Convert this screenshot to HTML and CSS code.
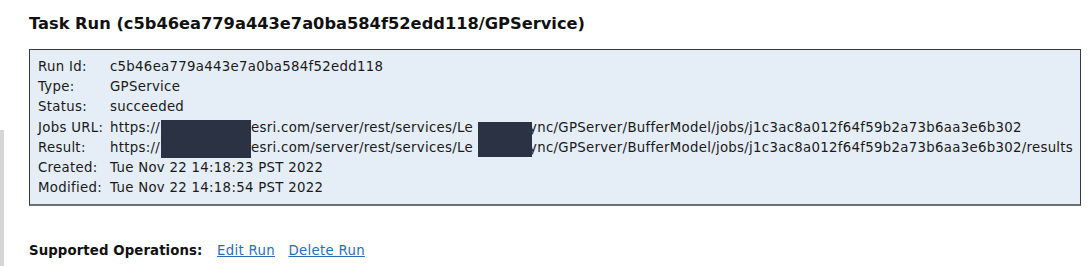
FILE: index.html
```html
<!DOCTYPE html>
<html>
<head>
<meta charset="utf-8">
<title>Task Run</title>
<link rel="stylesheet" href="styles.css">
</head>
<body>
<div class="edge"></div>
<div class="page">
  <h2 class="title">Task Run (c5b46ea779a443e7a0ba584f52edd118/GPService)</h2>
  <div class="panel">
    <div class="info">
      <div class="lbl">Run Id:</div><div class="val">c5b46ea779a443e7a0ba584f52edd118</div>
      <div class="lbl">Type:</div><div class="val">GPService</div>
      <div class="lbl">Status:</div><div class="val">succeeded</div>
      <div class="lbl">Jobs URL:</div><div class="val">https://<span class="gap1 mask1"></span>esri.com/server/rest/services/Le<span class="gap2 mask2"></span>ync/GPServer/BufferModel/jobs/j1c3ac8a012f64f59b2a73b6aa3e6b302</div>
      <div class="lbl">Result:</div><div class="val">https://<span class="gap1"></span>esri.com/server/rest/services/Le<span class="gap2"></span>ync/GPServer/BufferModel/jobs/j1c3ac8a012f64f59b2a73b6aa3e6b302/results</div>
      <div class="lbl">Created:</div><div class="val">Tue Nov 22 14:18:23 PST 2022</div>
      <div class="lbl">Modified:</div><div class="val">Tue Nov 22 14:18:54 PST 2022</div>
    </div>
  </div>
  <div class="ops">
    <span class="ops-label">Supported Operations:</span>
    <a class="op" href="#">Edit Run</a>
    <a class="op" href="#">Delete Run</a>
  </div>
</div>
</body>
</html>
```

FILE: styles.css
```css
html, body {
  margin: 0;
  padding: 0;
  background: #ffffff;
}
body {
  font-family: "DejaVu Sans", Verdana, sans-serif;
  font-size: 13.3px;
  letter-spacing: 0.3px;
  color: #1a1a1a;
  position: relative;
  min-height: 266px;
}
.edge {
  position: absolute;
  left: 0;
  top: 130px;
  width: 4px;
  height: 136px;
  background: #d6d6d6;
}
.page {
  padding: 0 9px 0 29px;
}
.title {
  margin: 0;
  padding-top: 13px;
  font-size: 16.25px;
  letter-spacing: 0;
  font-weight: bold;
  line-height: 22px;
  color: #111;
}
.panel {
  margin-top: 14px;
  width: 1052px;
  box-sizing: border-box;
  background: #e5edf6;
  border: 1px solid #3a3a3a;
  border-bottom: 2px solid #6b7171;
  padding: 7px 0 6px 8px;
}
.info {
  display: grid;
  grid-template-columns: 72px auto;
  line-height: 20.2px;
}
.val {
  white-space: nowrap;
}
.gap1, .gap2 {
  display: inline-block;
  height: 20.2px;
  vertical-align: top;
  position: relative;
}
.gap1 {
  width: 91px;
}
.gap2 {
  width: 56px;
}
.mask1::after, .mask2::after {
  content: "";
  position: absolute;
  background: #2b3243;
}
.mask1::after {
  left: 1px;
  top: 2px;
  width: 90px;
  height: 38px;
}
.mask2::after {
  left: 5px;
  top: 4px;
  width: 54px;
  height: 35px;
}
.ops {
  margin-top: 37px;
}
.ops-label {
  font-weight: bold;
  letter-spacing: 0.1px;
  color: #111;
  margin-right: 10px;
}
.op {
  color: #2a6cb8;
  text-decoration: underline;
  margin-right: 9px;
}
```
